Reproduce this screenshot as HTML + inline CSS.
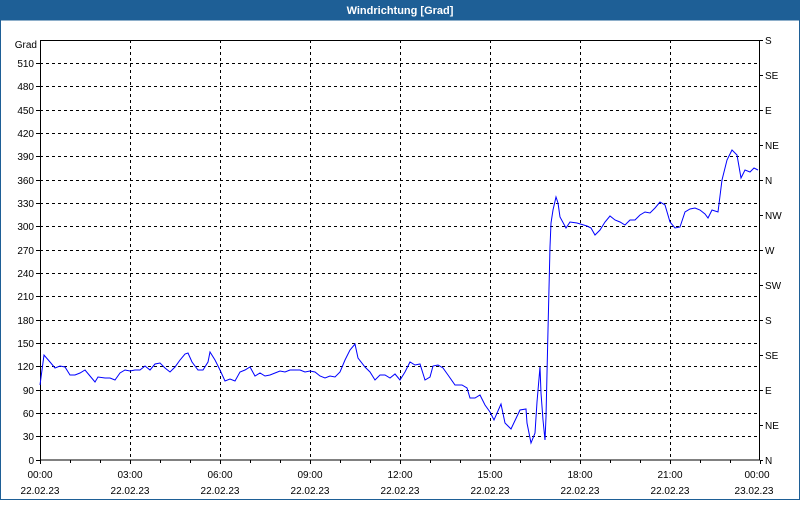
<!DOCTYPE html>
<html><head><style>
body{margin:0;width:800px;height:500px;overflow:hidden;background:#fff;font-family:"Liberation Sans",sans-serif}
</style></head><body>
<svg width="800" height="500" xmlns="http://www.w3.org/2000/svg" font-family="Liberation Sans, sans-serif" font-size="10" shape-rendering="crispEdges">
<rect x="0" y="0" width="800" height="500" fill="#fff"/>
<rect x="0" y="0" width="800" height="20" fill="#1e5f96"/>
<rect x="0.5" y="20" width="799" height="479.5" fill="none" stroke="#1e5f96" stroke-width="1"/>
<text x="400" y="14" fill="#fff" font-weight="bold" text-anchor="middle" font-size="11">Windrichtung [Grad]</text>
<g stroke="#000" stroke-dasharray="3,3" stroke-width="1">
<path d="M40 63.5H760M40 86.5H760M40 110.5H760M40 133.5H760M40 156.5H760M40 180.5H760M40 203.5H760M40 226.5H760M40 250.5H760M40 273.5H760M40 296.5H760M40 320.5H760M40 343.5H760M40 366.5H760M40 390.5H760M40 413.5H760M40 436.5H760"/>
<path d="M130.5 40V460M220.5 40V460M310.5 40V460M400.5 40V460M490.5 40V460M580.5 40V460M670.5 40V460"/>
</g>
<rect x="40.5" y="40.5" width="719" height="419.5" fill="none" stroke="#000"/>
<g stroke="#000"><path d="M760 40.5h3M760 75.5h3M760 110.5h3M760 145.5h3M760 180.5h3M760 215.5h3M760 250.5h3M760 285.5h3M760 320.5h3M760 355.5h3M760 390.5h3M760 425.5h3M760 460.5h3M36 63.5h4M36 86.5h4M36 110.5h4M36 133.5h4M36 156.5h4M36 180.5h4M36 203.5h4M36 226.5h4M36 250.5h4M36 273.5h4M36 296.5h4M36 320.5h4M36 343.5h4M36 366.5h4M36 390.5h4M36 413.5h4M36 436.5h4M36 460.5h4"/>
<path d="M40.5 460v4M70.5 460v3M100.5 460v3M130.5 460v4M160.5 460v3M190.5 460v3M220.5 460v4M250.5 460v3M280.5 460v3M310.5 460v4M340.5 460v3M370.5 460v3M400.5 460v4M430.5 460v3M460.5 460v3M490.5 460v4M520.5 460v3M550.5 460v3M580.5 460v4M610.5 460v3M640.5 460v3M670.5 460v4M700.5 460v3M730.5 460v3M760.5 460v4"/></g>
<g text-anchor="end" fill="#000">
<text x="37" y="48">Grad</text>
<text x="34" y="67">510</text><text x="34" y="90">480</text><text x="34" y="114">450</text><text x="34" y="137">420</text><text x="34" y="160">390</text><text x="34" y="184">360</text><text x="34" y="207">330</text><text x="34" y="230">300</text><text x="34" y="254">270</text><text x="34" y="277">240</text><text x="34" y="300">210</text><text x="34" y="324">180</text><text x="34" y="347">150</text><text x="34" y="370">120</text><text x="34" y="394">90</text><text x="34" y="417">60</text><text x="34" y="440">30</text><text x="34" y="464">0</text>
</g>
<g fill="#000">
<text x="765" y="44">S</text><text x="765" y="79">SE</text><text x="765" y="114">E</text><text x="765" y="149">NE</text><text x="765" y="184">N</text><text x="765" y="219">NW</text><text x="765" y="254">W</text><text x="765" y="289">SW</text><text x="765" y="324">S</text><text x="765" y="359">SE</text><text x="765" y="394">E</text><text x="765" y="429">NE</text><text x="765" y="464">N</text>
</g>
<g text-anchor="middle" fill="#000">
<text x="40" y="478">00:00</text><text x="130" y="478">03:00</text><text x="220" y="478">06:00</text><text x="310" y="478">09:00</text><text x="400" y="478">12:00</text><text x="490" y="478">15:00</text><text x="580" y="478">18:00</text><text x="670" y="478">21:00</text><text x="757" y="478">00:00</text>
<text x="40" y="494">22.02.23</text><text x="130" y="494">22.02.23</text><text x="220" y="494">22.02.23</text><text x="310" y="494">22.02.23</text><text x="400" y="494">22.02.23</text><text x="490" y="494">22.02.23</text><text x="580" y="494">22.02.23</text><text x="670" y="494">22.02.23</text><text x="754" y="494">23.02.23</text>
</g>
<polyline shape-rendering="auto" fill="none" stroke="#0000ff" stroke-width="1" points="40,385 44,355 50,362 55,368 60,366 65,367 70,375 75,375 80,373 85,370 90,376 95,382 98,377 105,378 110,378 115,380 120,373 125,370 130,371 135,370 140,370 145,366 150,370 155,364 160,363 165,368 170,372 175,367 180,360 185,354 188,353 192,362 198,370 203,370 208,362 210,352 215,360 220,370 225,381 230,379 235,381 240,372 245,370 250,367 255,376 260,373 265,376 270,375 275,373 280,371 285,372 290,370 295,370 300,370 305,372 310,371 315,372 320,376 325,378 330,376 335,377 340,372 345,360 350,350 355,344 358,358 365,367 370,372 375,380 380,375 385,375 390,378 395,374 400,380 405,372 410,362 415,365 420,364 425,380 430,377 433,366 438,365 443,368 448,375 455,385 462,385 467,388 470,398 475,398 480,395 485,405 490,412 494,420 501,404 505,423 511,429 520,410 526,409 527,423 531,443 535,433 537,402 540,367 541,393 543,420 545,440 546,417 548,330 550,247 551,223 553,210 556,197 558,203 560,217 566,228 570,222 577,223 587,226 591,228 595,235 600,230 605,222 610,216 615,220 620,222 625,225 630,220 635,220 640,215 645,212 650,213 655,208 660,202 665,205 670,222 675,228 680,227 685,212 690,209 695,208 700,210 705,214 708,218 712,210 718,212 722,180 727,160 732,150 737,155 741,178 745,170 750,172 754,168 758,170"/>
</svg>
</body></html>
